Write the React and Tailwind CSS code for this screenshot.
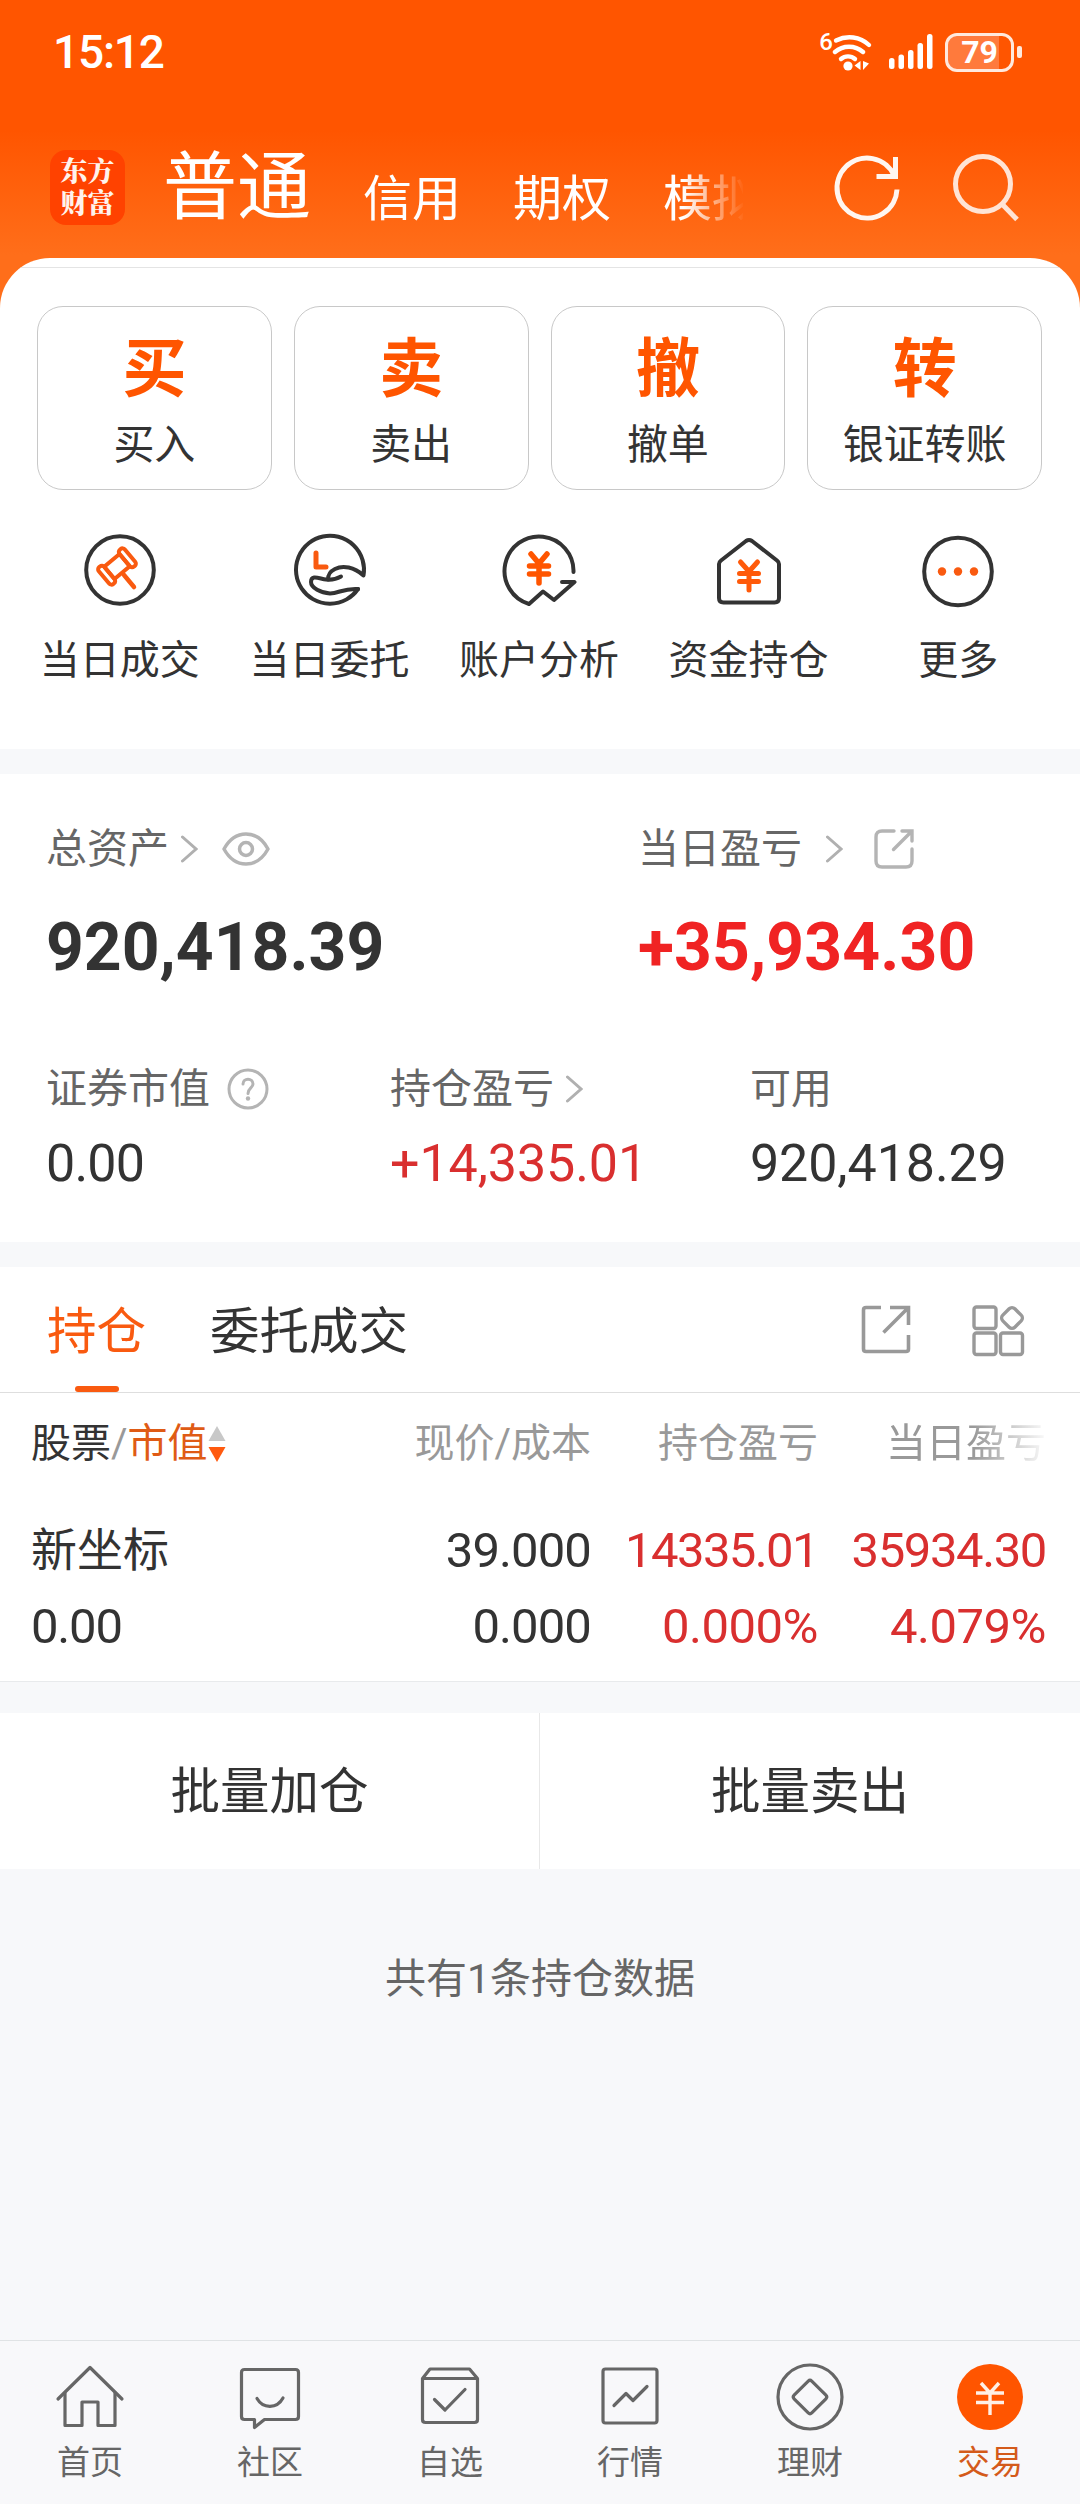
import { useState } from "react";

const quickActions = [
  { glyph: "买", label: "买入" },
  { glyph: "卖", label: "卖出" },
  { glyph: "撤", label: "撤单" },
  { glyph: "转", label: "银证转账" },
];

const shortcuts = [
  { icon: GavelIcon, label: "当日成交" },
  { icon: HandIcon, label: "当日委托" },
  { icon: AnalysisIcon, label: "账户分析" },
  { icon: HouseYenIcon, label: "资金持仓" },
  { icon: MoreIcon, label: "更多" },
];

const navItems = [
  { icon: HomeIcon, label: "首页" },
  { icon: ChatIcon, label: "社区" },
  { icon: BoxIcon, label: "自选" },
  { icon: ChartIcon, label: "行情" },
  { icon: CoinIcon, label: "理财" },
  { icon: TradeIcon, label: "交易" },
];

/* ---------- status bar ---------- */

function WifiIcon() {
  return (
    <svg width="42" height="42" viewBox="14 0 42 42" fill="none" stroke="#fff" strokeWidth="4.4" strokeLinecap="round">
      <path d="M18 9.5C29 4 42 5.5 51 14" />
      <path d="M17 21C25 14 37 14 45 21" />
      <path d="M23 28C27 24.500 33 24.500 37 28" />
      <circle cx="30" cy="35" r="4.600" fill="#fff" stroke="none" />
      <path d="M42.500 30v9l-6-4.500zM45 30v9l6-6.500z" fill="#fff" stroke="none" />
    </svg>
  );
}

function SignalIcon() {
  return (
    <svg width="44" height="38" viewBox="0 0 44 38" fill="#fff">
      <rect x="0" y="25" width="5.500" height="11" rx="2.500" />
      <rect x="9.500" y="21.500" width="5.500" height="14.500" rx="2.500" />
      <rect x="19" y="17" width="5.500" height="19" rx="2.500" />
      <rect x="28.500" y="10" width="5.500" height="26" rx="2.500" />
      <rect x="38" y="1" width="5.500" height="35" rx="2.500" />
    </svg>
  );
}

function StatusBar() {
  return (
    <div className="flex h-[104px] items-center justify-between pl-[53px] pr-[58px]">
      <span className="text-[46px] leading-none font-medium tracking-[-1.2px] text-white">15:12</span>
      <div className="flex items-center">
        <span className="-mr-[1px] h-[38px] text-[24px] leading-[19px] font-medium text-white">6</span>
        <WifiIcon />
        <div className="ml-[15px]">
          <SignalIcon />
        </div>
        <div className="ml-[12px] flex h-[39px] w-[69px] items-center justify-center rounded-[12px] border-[3px] border-[#ffe9dd] bg-[linear-gradient(to_right,#ff7a3c_51px,transparent_51px)]">
          <span className="text-[32px] leading-none font-bold text-white">79</span>
        </div>
        <div className="ml-[3px] h-[12px] w-[5px] rounded-[2px] bg-[#ffe9dd]" />
      </div>
    </div>
  );
}

/* ---------- header ---------- */

function RefreshIcon() {
  return (
    <svg width="76" height="76" viewBox="-38 -38 76 76" fill="none" stroke="#fff6f0" strokeWidth="5">
      <path d="M30 1.500A30 30 0 1 1 27.500 -12" />
      <path d="M28.500 -31V-11.500H9.500" />
    </svg>
  );
}

function SearchIcon() {
  return (
    <svg width="76" height="76" viewBox="-34 -34 76 76" fill="none" stroke="#ffe4d5" strokeWidth="5">
      <circle r="27.500" />
      <path d="M19.500 20.500L34 35.500" />
    </svg>
  );
}

function Header() {
  return (
    <div className="flex h-[154px] items-start pl-[50px]">
      <div className="mt-[46px] flex h-[75px] w-[75px] shrink-0 flex-col items-center justify-center rounded-[16px] bg-[#ff4200] font-[Roboto,'Noto_Serif_CJK_SC','Noto_Sans_CJK_SC',sans-serif] text-[27px] leading-[32px] font-black text-[#fff3ec]">
        <span>东方</span>
        <span>财富</span>
      </div>
      <nav className="ml-[38px] flex h-[150px] w-[580px] shrink-0 items-start overflow-hidden whitespace-nowrap text-white [mask-image:linear-gradient(to_right,#000_520px,transparent_582px)]">
        <span className="mt-[40px] w-[200px] shrink-0 text-[74px] leading-[88px]">普通</span>
        <span className="mt-[66px] w-[150px] shrink-0 text-[49px] leading-[60px]">信用</span>
        <span className="mt-[66px] w-[150px] shrink-0 text-[49px] leading-[60px]">期权</span>
        <span className="mt-[66px] shrink-0 text-[49px] leading-[60px]">模拟</span>
      </nav>
      <div className="mt-[46px] ml-[86px] flex">
        <RefreshIcon />
        <div className="ml-[44px]">
          <SearchIcon />
        </div>
      </div>
    </div>
  );
}

/* ---------- shortcut icons, all centred on 0,0 ---------- */

function ShortcutSvg({ children }) {
  return (
    <svg
      width="76"
      height="76"
      viewBox="-38 -38 76 76"
      fill="none"
      stroke="#333"
      strokeWidth="4"
      strokeLinecap="round"
      strokeLinejoin="round"
    >
      {children}
    </svg>
  );
}

function GavelIcon() {
  return (
    <ShortcutSvg>
      <circle r="33.800" />
      <g stroke="#f95a10">
        <g transform="translate(-3 -3.500) rotate(-40)">
          <rect x="-10" y="-8" width="20" height="16" />
          <rect x="-17" y="-11" width="7" height="22" rx="3" />
          <rect x="10" y="-11" width="7" height="22" rx="3" />
        </g>
        <path d="M4 5L14 17" strokeWidth="4.500" />
      </g>
    </ShortcutSvg>
  );
}

function HandIcon() {
  return (
    <ShortcutSvg>
      <path d="M29 19A34 34 0 1 1 34.500 5.500C25 -3 14 -5 6 -1C1 1.500 -1 4 -1 9.500" />
      <path d="M12 6.500C6 10 2 10 -3 9.500C-9 9 -18 4 -18 12C-18 18 -8 23 1 23.500C10 23.500 14 18 29 19" />
      <path d="M-13 -17V-3H-3" stroke="#f95a10" strokeWidth="5" />
    </ShortcutSvg>
  );
}

function AnalysisIcon() {
  return (
    <ShortcutSvg>
      <path d="M34.500 2A34.500 34.500 0 1 0 -10 34L4 21.500L15 30L35.500 12H23" />
      <path d="M-8 -16L0 -6.500L8 -16M0 -6.500V13M-9.500 -4H9.500M-9.500 4H9.500" stroke="#ff5500" strokeWidth="5.500" />
    </ShortcutSvg>
  );
}

function HouseYenIcon() {
  return (
    <ShortcutSvg>
      <path d="M-30 -6Q-30 -8 -28 -9.500L-3 -29Q0 -31 3 -29L28 -9.500Q30 -8 30 -6V28Q30 32.500 25.500 32.500H-25.500Q-30 32.500 -30 28Z" />
      <path d="M-8.500 -8L0 1.500L8.500 -8M0 1.500V20M-9.500 3.500H9.500M-9.500 11.500H9.500" stroke="#ff5a0a" strokeWidth="5" />
    </ShortcutSvg>
  );
}

function MoreIcon() {
  return (
    <ShortcutSvg>
      <circle cy="1.500" r="33.800" />
      <g fill="#f95a10" stroke="none">
        <circle cx="-16" cy="1.500" r="4.200" />
        <circle cy="1.500" r="4.200" />
        <circle cx="16" cy="1.500" r="4.200" />
      </g>
    </ShortcutSvg>
  );
}

function ActionPanel() {
  return (
    <div className="h-[491px] overflow-hidden rounded-t-[50px] bg-white pt-[9px]">
      <div className="border-t border-[#e4e4e4]" />
      <div className="mt-[38px] grid grid-cols-4 gap-[22px] pr-[38px] pl-[37px]">
        {quickActions.map((item) => (
          <button
            key={item.label}
            className="flex h-[184px] flex-col items-center rounded-[26px] border border-[#c8c8c8]"
          >
            <span className="mt-[29px] text-[64px] leading-[68px] font-bold text-[#ff5500]">{item.glyph}</span>
            <span className="mt-[19px] text-[41px] leading-[44px] text-[#333]">{item.label}</span>
          </button>
        ))}
      </div>
      <div className="mt-[42px] grid grid-cols-5 pr-[17px] pl-[15px]">
        {shortcuts.map(({ icon: Icon, label }) => (
          <button key={label} className="flex flex-col items-center">
            <Icon />
            <span className="mt-[31px] text-[40px] leading-[44px] text-[#333]">{label}</span>
          </button>
        ))}
      </div>
    </div>
  );
}

/* ---------- assets ---------- */

function Arrow({ className }) {
  return (
    <svg className={className} width="17" height="28" viewBox="0 0 17 28" fill="none" stroke="#b0b0b0" strokeWidth="3" strokeLinecap="round">
      <path d="M1.500 2L15 14L1.500 26" />
    </svg>
  );
}

function EyeIcon() {
  return (
    <svg width="48" height="34" viewBox="0 0 48 34" fill="none" stroke="#b4b4b4" strokeWidth="3.500" strokeLinejoin="round">
      <path d="M2 17C13 -3 35 -3 46 17C35 37 13 37 2 17Z" />
      <circle cx="24" cy="17" r="6.500" />
    </svg>
  );
}

function SmallShareIcon() {
  return (
    <svg width="40" height="40" viewBox="0 0 40 40" fill="none" stroke="#b4b4b4" strokeWidth="3.400" strokeLinecap="round">
      <path d="M20 2H8Q2 2 2 8V32Q2 38 8 38H32Q38 38 38 32V20" />
      <path d="M28 2H38V12M37 3L19.500 20.500" />
    </svg>
  );
}

function HelpIcon() {
  return (
    <svg width="42" height="42" viewBox="0 0 42 42" fill="none" stroke="#b4b4b4" strokeWidth="3" strokeLinecap="round">
      <circle cx="21" cy="21" r="19" />
      <path d="M16 16C16 9.500 26 9.500 26 16C26 20 21 20 21 25.500" />
      <circle cx="21" cy="30.500" r="2.200" fill="#b4b4b4" stroke="none" />
    </svg>
  );
}

function Assets() {
  return (
    <div className="h-[468px] bg-white">
      <div className="flex pt-[50px]">
        <div className="w-[592px] pl-[46px]">
          <div className="flex h-[50px] items-center text-[41px] leading-[50px] text-[#666]">
            <span>总资产</span>
            <Arrow className="ml-[12px]" />
            <div className="ml-[24px]">
              <EyeIcon />
            </div>
          </div>
          <div className="mt-[38px] text-[66px] leading-[72px] font-bold text-[#333]">920,418.39</div>
        </div>
        <div className="pl-[46px]">
          <div className="flex h-[50px] items-center text-[41px] leading-[50px] text-[#666]">
            <span>当日盈亏</span>
            <Arrow className="ml-[24px]" />
            <div className="ml-[31px]">
              <SmallShareIcon />
            </div>
          </div>
          <div className="mt-[38px] text-[66px] leading-[72px] font-bold tracking-[0.1px] text-[#f02323]">+35,934.30</div>
        </div>
      </div>
      <div className="mt-[80px] flex">
        <div className="w-[390px] pl-[46px]">
          <div className="flex h-[50px] items-center text-[41px] leading-[50px] text-[#666]">
            <span>证券市值</span>
            <div className="ml-[17px]">
              <HelpIcon />
            </div>
          </div>
          <div className="mt-[22px] text-[52px] leading-[56px] tracking-[-0.8px] text-[#333]">0.00</div>
        </div>
        <div className="w-[360px]">
          <div className="flex h-[50px] items-center text-[41px] leading-[50px] text-[#666]">
            <span>持仓盈亏</span>
            <Arrow className="ml-[12px]" />
          </div>
          <div className="mt-[22px] text-[52px] leading-[56px] tracking-[-0.1px] text-[#d92f2f]">+14,335.01</div>
        </div>
        <div>
          <div className="h-[50px] text-[41px] leading-[50px] text-[#666]">可用</div>
          <div className="mt-[22px] text-[52px] leading-[56px] tracking-[-0.1px] text-[#333]">920,418.29</div>
        </div>
      </div>
    </div>
  );
}

/* ---------- positions ---------- */

function ShareIcon() {
  return (
    <svg width="50" height="50" viewBox="0 0 50 50" fill="none" stroke="#999" strokeWidth="3.600">
      <path d="M20 2.500H5Q2.500 2.500 2.500 5V44Q2.500 46.500 5 46.500H45Q47.500 46.500 47.500 44V30" />
      <path d="M29 2.500H47.500V20M47 3L22.500 27.500" />
    </svg>
  );
}

function GridIcon() {
  return (
    <svg width="54" height="52" viewBox="0 0 54 52" fill="none" stroke="#999" strokeWidth="3.400">
      <rect x="2" y="2" width="22" height="21.500" rx="2.500" />
      <rect x="2" y="28" width="22" height="21.500" rx="2.500" />
      <rect x="28.500" y="28" width="22" height="21.500" rx="2.500" />
      <rect x="31.500" y="4.500" width="17" height="17" rx="4" transform="rotate(45 40 13)" />
    </svg>
  );
}

function SortIcon() {
  return (
    <svg width="18" height="38" viewBox="0 0 18 38">
      <path d="M9 1L17.500 16H0.500Z" fill="#c8c8c8" />
      <path d="M9 37L17.500 22H0.500Z" fill="#ff5a0f" />
    </svg>
  );
}

function Positions() {
  const [tab, setTab] = useState("持仓");

  return (
    <div className="h-[415px] border-b border-[#e8eaec] bg-white">
      <div className="flex h-[126px] border-b border-[#dedede]">
        {["持仓", "委托成交"].map((name) => (
          <button
            key={name}
            onClick={() => setTab(name)}
            className={
              "flex flex-col items-center text-[49.5px] leading-[56px] " +
              (tab === name ? "ml-[47px] text-[#f95a10]" : "ml-[64px] text-[#333]")
            }
          >
            <span className="mt-[37px]">{name}</span>
            {tab === name && <span className="mt-[26px] h-[6px] w-[44px] rounded-full bg-[#f95a10]" />}
          </button>
        ))}
        <div className="mt-[38px] mr-[54px] ml-auto flex">
          <ShareIcon />
          <div className="ml-[61px]">
            <GridIcon />
          </div>
        </div>
      </div>

      <div className="grid h-[102px] grid-cols-[301px_259px_227px_228px] items-center pl-[31px] text-right text-[40px] leading-[44px] text-[#999]">
        <div className="flex items-center text-left">
          <span className="text-[#333]">股票</span>
          <span>/</span>
          <span className="text-[#df5b15]">市值</span>
          <SortIcon />
        </div>
        <span>现价/成本</span>
        <span>持仓盈亏</span>
        <span className="[mask-image:linear-gradient(to_right,#000_155px,rgba(0,0,0,0.05)_228px)]">当日盈亏</span>
      </div>

      <div className="grid grid-cols-[301px_259px_227px_228px] pl-[31px] text-right text-[49px] leading-[76px] text-[#333]">
        <span className="mt-[17px] text-left text-[46px]">新坐标</span>
        <span className="mt-[18px] tracking-[-0.9px]">39.000</span>
        <span className="mt-[18px] tracking-[-1.600px] text-[#d92f2f]">14335.01</span>
        <span className="mt-[18px] tracking-[-1.400px] text-[#d92f2f]">35934.30</span>
        <span className="text-left tracking-[-1.200px]">0.00</span>
        <span className="tracking-[-0.9px]">0.000</span>
        <span className="tracking-[-0.5px] text-[#d92f2f]">0.000%</span>
        <span className="tracking-[-0.5px] text-[#d92f2f]">4.079%</span>
      </div>
    </div>
  );
}

/* ---------- bottom navigation ---------- */

function NavSvg({ children }) {
  return (
    <svg
      width="76"
      height="70"
      viewBox="-38 -35 76 70"
      fill="none"
      stroke="#666"
      strokeWidth="3.200"
      strokeLinecap="round"
      strokeLinejoin="round"
    >
      {children}
    </svg>
  );
}

function HomeIcon() {
  return (
    <NavSvg>
      <path d="M-32 2L0 -29.500L32 2" />
      <path d="M-25 -4V28.500H-8V5H8V28.500H25V-4" />
    </NavSvg>
  );
}

function ChatIcon() {
  return (
    <NavSvg>
      <path d="M-25.500 -27.500H25.500Q28.500 -27.500 28.500 -24.500V19.500Q28.500 22.500 25.500 22.500H-5.500L-15.500 30.500V22.500H-25.500Q-28.500 22.500 -28.500 19.500V-24.500Q-28.500 -27.500 -25.500 -27.500Z" />
      <path d="M-13 1.500C-7 12 7 12 13 1" />
    </NavSvg>
  );
}

function BoxIcon() {
  return (
    <NavSvg>
      <path d="M-27.500 -18.500H27.500V22.500Q27.500 25.500 24.500 25.500H-24.500Q-27.500 25.500 -27.500 22.500ZL-20 -28H19.500L27.500 -18.500" />
      <path d="M-15.500 2.500L-5 13L15 -7.500" />
    </NavSvg>
  );
}

function ChartIcon() {
  return (
    <NavSvg>
      <rect x="-27" y="-28" width="54" height="54" rx="2.500" />
      <path d="M-16 8.500L-4 -3.500L3 3.500L17 -10.500" />
    </NavSvg>
  );
}

function CoinIcon() {
  return (
    <NavSvg>
      <circle r="32" />
      <rect x="-12.500" y="-12.500" width="25" height="25" rx="2.500" transform="rotate(45)" />
    </NavSvg>
  );
}

function TradeIcon() {
  return (
    <NavSvg>
      <circle r="33" fill="#ff5500" stroke="none" />
      <path d="M-9 -14L0 -4L9 -14M0 -4V18M-14 -4H14M-14 5.500H14" stroke="#fff0e6" strokeWidth="3.400" strokeLinecap="butt" />
    </NavSvg>
  );
}

function BottomNav() {
  return (
    <div className="mt-auto grid h-[164px] grid-cols-6 border-t border-[#e0e3e5] bg-[#f8f8fa]">
      {navItems.map(({ icon: Icon, label }) => (
        <button key={label} className="flex flex-col items-center pt-[21px]">
          <Icon />
          <span
            className={
              "mt-[11px] text-[33px] leading-[40px] " + (label === "交易" ? "text-[#d45a1a]" : "text-[#666]")
            }
          >
            {label}
          </span>
        </button>
      ))}
    </div>
  );
}

export default function App() {
  return (
    <div className="flex h-[2504px] w-[1080px] flex-col overflow-hidden bg-[#f7f8fa] font-[Roboto,'Noto_Sans_CJK_SC',sans-serif]">
      <div className="bg-[linear-gradient(to_bottom,#ff5500_130px,#ff6e1a_255px)]">
        <StatusBar />
        <Header />
        <ActionPanel />
      </div>
      <div className="mt-[25px]">
        <Assets />
      </div>
      <div className="mt-[25px]">
        <Positions />
      </div>
      <div className="mt-[31px] flex h-[156px] bg-white text-[49.5px] text-[#333]">
        <button className="w-[540px] border-r border-[#e8e8e8] pt-[2px]">批量加仓</button>
        <button className="flex-1 pt-[2px]">批量卖出</button>
      </div>
      <p className="mt-[88px] text-center text-[41px] leading-[44px] text-[#666]">共有1条持仓数据</p>
      <BottomNav />
    </div>
  );
}
